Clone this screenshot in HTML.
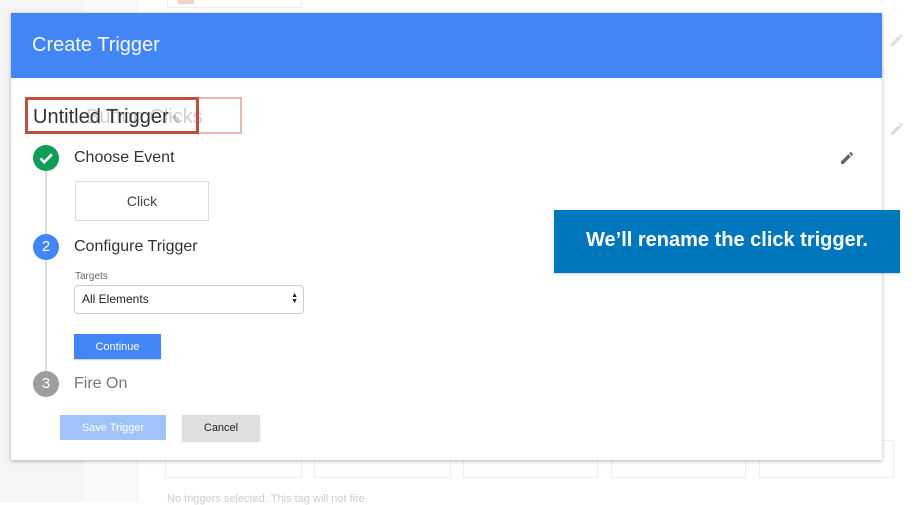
<!DOCTYPE html>
<html><head><meta charset="utf-8"><style>
*{margin:0;padding:0;box-sizing:border-box}
body{width:924px;height:502px;overflow:hidden;background:#fff;font-family:"Liberation Sans",sans-serif;position:relative}
.a{position:absolute}
.circ{position:absolute;width:26px;height:26px;border-radius:50%;color:#fff;font-size:15px;text-align:center;line-height:26px}
</style></head><body>
<div class="a" style="left:0;top:0;width:84px;height:502px;background:#f5f5f5"></div>
<div class="a" style="left:84px;top:0;width:54px;height:502px;background:#fafafa;border-right:1px solid #eee"></div>
<div class="a" style="left:167px;top:0;width:135px;height:8px;border:1px solid #eee;border-top:none"></div>
<div class="a" style="left:178px;top:0;width:16px;height:4px;background:#f8d0c4"></div>
<div class="a" style="left:165px;top:440px;width:137px;height:38px;border:1px solid #eee"></div>
<div class="a" style="left:314px;top:440px;width:137px;height:38px;border:1px solid #eee"></div>
<div class="a" style="left:463px;top:440px;width:135px;height:38px;border:1px solid #eee"></div>
<div class="a" style="left:611px;top:440px;width:135px;height:38px;border:1px solid #eee"></div>
<div class="a" style="left:759px;top:440px;width:135px;height:38px;border:1px solid #eee"></div>
<div class="a" style="left:167px;top:493px;font-size:11px;color:#ccc">No triggers selected. This tag will not fire.</div>
<svg class="a" style="left:889px;top:32px" width="16" height="16" viewBox="0 0 24 24"><path d="M3 17.25V21h3.75L17.8 9.94l-3.75-3.75L3 17.25zM20.7 7.04a1 1 0 000-1.41l-2.34-2.34a1 1 0 00-1.41 0l-1.83 1.83 3.75 3.75 1.83-1.83z" fill="#ddd"/></svg>
<svg class="a" style="left:889px;top:121px" width="16" height="16" viewBox="0 0 24 24"><path d="M3 17.25V21h3.75L17.8 9.94l-3.75-3.75L3 17.25zM20.7 7.04a1 1 0 000-1.41l-2.34-2.34a1 1 0 00-1.41 0l-1.83 1.83 3.75 3.75 1.83-1.83z" fill="#ddd"/></svg>

<div class="a" style="left:11px;top:13px;width:871px;height:447px;background:#fff;box-shadow:0 1px 4px rgba(0,0,0,.3)">
  <div style="height:65px;background:#4285f4;color:#f4f8ff;font-size:20px;padding:21px 0 0 21px">Create Trigger</div>
</div>
<div class="a" style="left:198px;top:97px;width:44px;height:37px;border:2px solid #e8b8b0;border-left:none"></div>
<div class="a" style="left:86px;top:106px;font-size:20px;color:#d0d0d0;white-space:nowrap">Button Clicks</div>
<div class="a" style="left:33px;top:106px;font-size:20px;color:#333;white-space:nowrap">Untitled Trigger<span style="color:#999;font-size:11px"> ✎</span></div>
<div class="a" style="left:25px;top:97px;width:174px;height:37px;border:3px solid #c0503e"></div>

<div class="a" style="left:45px;top:171px;width:2px;height:200px;background:#ddd"></div>
<div class="circ" style="left:33px;top:145px;background:#0f9d58"><svg width="26" height="26" viewBox="0 0 26 26"><path d="M7.5 13.5l3.8 3.8 7.5-8" stroke="#fff" stroke-width="2.6" fill="none"/></svg></div>
<div class="a" style="left:74px;top:149px;font-size:16px;color:#333">Choose Event</div>
<svg class="a" style="left:839px;top:150px" width="16" height="16" viewBox="0 0 24 24"><path d="M3 17.25V21h3.75L17.8 9.94l-3.75-3.75L3 17.25zM20.7 7.04a1 1 0 000-1.41l-2.34-2.34a1 1 0 00-1.41 0l-1.83 1.83 3.75 3.75 1.83-1.83z" fill="#666"/></svg>
<div class="a" style="left:75px;top:181px;width:134px;height:40px;border:1px solid #ddd;text-align:center;line-height:38px;font-size:14px;color:#444;background:#fff">Click</div>

<div class="circ" style="left:33px;top:234px;background:#4285f4">2</div>
<div class="a" style="left:74px;top:238px;font-size:16px;color:#333">Configure Trigger</div>
<div class="a" style="left:75px;top:271px;font-size:10px;color:#666">Targets</div>
<div class="a" style="left:74px;top:285px;width:230px;height:29px;border:1px solid #ccc;border-radius:4px;font-size:12px;color:#222;padding:6px 0 0 7px">All Elements<span style="position:absolute;right:5px;top:7px;font-size:7px;line-height:6px">▲<br>▼</span></div>
<div class="a" style="left:74px;top:334px;width:87px;height:25px;background:#4285f4;color:#fff;font-size:11px;text-align:center;line-height:26px;box-shadow:0 1px 1px rgba(0,0,0,.2)">Continue</div>

<div class="circ" style="left:33px;top:371px;background:#9e9e9e">3</div>
<div class="a" style="left:74px;top:375px;font-size:16px;color:#777">Fire On</div>

<div class="a" style="left:60px;top:415px;width:106px;height:25px;background:#a0c3fa;color:#fff;font-size:11px;text-align:center;line-height:27px">Save Trigger</div>
<div class="a" style="left:182px;top:415px;width:78px;height:26px;background:#e0e0e0;color:#222;font-size:11px;text-align:center;line-height:27px;box-shadow:0 1px 1px rgba(0,0,0,.15)">Cancel</div>

<div class="a" style="left:554px;top:210px;width:346px;height:63px;background:#0077bd;color:#fff;font-size:20px;font-weight:bold;text-align:center;line-height:60px;box-shadow:0 1px 2px rgba(0,0,0,.2)">We’ll rename the click trigger.</div>
</body></html>
